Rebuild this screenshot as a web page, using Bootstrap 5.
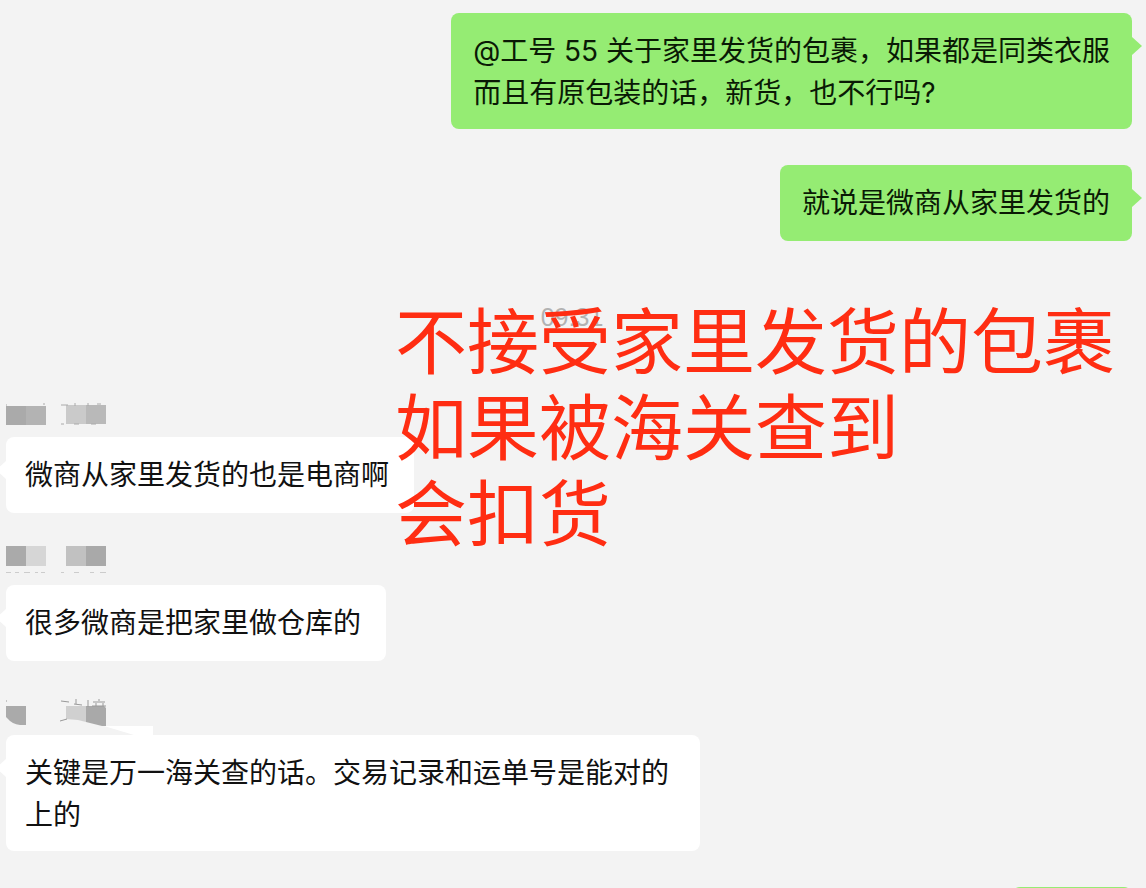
<!DOCTYPE html>
<html lang="zh-CN">
<head>
<meta charset="utf-8">
<meta name="viewport" content="width=device-width, initial-scale=1">
<title>聊天记录</title>
<link href="https://cdn.jsdelivr.net/npm/bootstrap@5.3.0/dist/css/bootstrap.min.css" rel="stylesheet">
<style>
  body { background: #f3f3f3; color: #111; font-family: Inter, "Noto Sans CJK SC", sans-serif; }
  .chat { padding: 13px 14px 0 6px; }
  .bubble { position: relative; flex-shrink: 0; min-height: 76px; padding: 17px 25px 15px 19px; border-radius: 8px; background: #fff; font-size: 28px; line-height: 42px; }
  .bubble::before { content: ""; position: absolute; top: 24px; right: 100%; border: 9px solid transparent; border-left-width: 0; border-right: 10px solid #fff; }
  .bubble.sent { padding: 17px 22px 15px; background: #95ec73; color: #0a1a05; }
  .bubble.sent::before { right: auto; left: 100%; border-right-width: 0; border-left: 10px solid #95ec73; }
  .bubble.multiline { padding-right: 31px; }
  .gap-sent { margin-bottom: 36px; }
  .gap-received { margin-bottom: 32px; }
  .stub { min-width: 120px; }
  .time-row { position: relative; margin: 58px 0 62px; padding-left: 6px; }
  .time-row time { color: #b2b2b2; font-family: "Liberation Sans", sans-serif; font-size: 25px; line-height: 36px; }
  .notice { position: absolute; z-index: 2; top: 0; right: 17px; color: #ff2d12; font-size: 72px; line-height: 86px; white-space: nowrap; }
</style>
</head>
<body>
<main class="chat vh-100 overflow-hidden d-flex flex-column align-items-start">
  <div class="bubble sent gap-sent align-self-end">@工号 55 关于家里发货的包裹&#xFF0C;如果都是同类衣服<br>而且有原包装的话&#xFF0C;新货&#xFF0C;也不行吗?</div>
  <div class="bubble sent align-self-end">就说是微商从家里发货的</div>

  <div class="time-row align-self-stretch d-flex justify-content-center flex-shrink-0">
    <time>09:31</time>
    <p class="notice mb-0">不接受家里发货的包裹<br>如果被海关查到<br>会扣货</p>
  </div>

  <!-- Masked sender names -->
  <svg class="flex-shrink-0" width="110" height="40" aria-hidden="true">
    <path fill="#aaa" d="M0 9h20v19H0z"/><path fill="#b3b3b3" d="M20 9h20v19H20z"/>
    <path fill="#cacaca" d="M60 8h20v19H60z"/><path fill="#b9b9b9" d="M80 8h20v19H80z"/>
    <path stroke="#aaa" fill="none" d="M0 7v11M37 7h2M55 8h7M69 6v3M82 6v3M91 7h4M55 27h3M68 27h5M85 27h5"/>
  </svg>
  <div class="bubble gap-received">微商从家里发货的也是电商啊</div>

  <svg class="flex-shrink-0" width="110" height="40" aria-hidden="true">
    <path fill="#aaa" d="M0 1h20v20H0z"/><path fill="#d6d6d6" d="M20 1h20v20H20z"/>
    <path fill="#c1c1c1" d="M60 1h20v20H60z"/><path fill="#a9a9a9" d="M80 1h20v20H80z"/>
    <path stroke="#ccc" fill="none" d="M0 27.500h5M9 27.500h4M18 27.500h6M29 27.500h3M35 27.500h4M55 27.500h3M68 27.500h5M84 27.500h4M94 27.500h6"/>
  </svg>
  <div class="bubble gap-received">很多微商是把家里做仓库的</div>

  <svg class="flex-shrink-0" width="148" height="42" aria-hidden="true">
    <path fill="#aaa" d="M0 13h20v19h-6Q6 31 2 26L0 24z"/>
    <path fill="#d0d0d0" d="M60 13h20v16l-8-2-12-1z"/><path fill="#a9a9a9" d="M80 13h18l2 2v18h-4l-16-4z"/>
    <path fill="#fff" d="M98 33h49v9h-19z"/>
    <path stroke="#999" fill="none" d="M0 7v2M55 8l8 1M68 11l8 1M70 6v5M82 7v7M93 6v2M87 9h12M90 10v3M97 10v3M86 13h14M54 28l7-2"/>
  </svg>
  <div class="bubble multiline gap-sent">关键是万一海关查的话。交易记录和运单号是能对的<br>上的</div>

  <div class="bubble sent stub align-self-end"></div>
</main>
<script src="https://cdn.jsdelivr.net/npm/bootstrap@5.3.0/dist/js/bootstrap.bundle.min.js"></script>
</body>
</html>
